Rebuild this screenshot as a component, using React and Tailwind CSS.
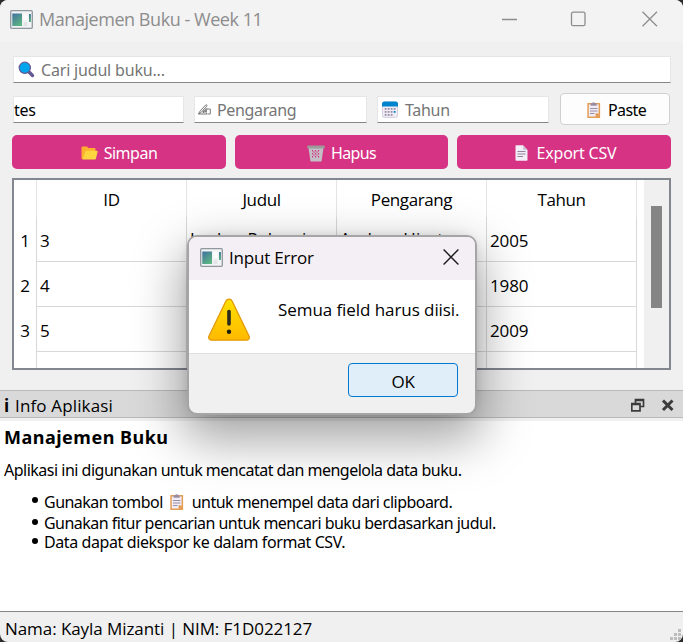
const SEGOE = "font-['Open_Sans','Noto_Sans',sans-serif]";
const TAHOMA = "font-['Noto_Sans','DejaVu_Sans',sans-serif]";

function AppIcon() {
  return (
    <svg width="23" height="19" viewBox="0 0 23 19" className="shrink-0">
      <defs>
        <linearGradient id="pane" x1="0" y1="0" x2="0.6" y2="1">
          <stop offset="0" stopColor="#3f6f9f" />
          <stop offset="1" stopColor="#5cb384" />
        </linearGradient>
      </defs>
      <rect x="0.7" y="0.7" width="21.6" height="17.6" rx="1" fill="#f1f3f5" stroke="#8f979f" strokeWidth="1.3" />
      <rect x="2.3" y="3.5" width="9.7" height="12.5" fill="url(#pane)" />
      <rect x="13.500" y="4" width="4" height="6" fill="#fbfcfc" />
      <rect x="13.500" y="12" width="4" height="4" fill="#e3e5e8" />
      <rect x="19" y="4" width="2" height="8" fill="url(#pane)" />
    </svg>
  );
}

function SearchIcon() {
  return (
    <svg width="17" height="17" viewBox="0 0 17 17" className="shrink-0">
      <path d="M10.5 10.5 14.500 14.500" stroke="#635994" strokeWidth="3.4" strokeLinecap="round" />
      <circle cx="6.8" cy="6.800" r="5.600" fill="#00a6ed" stroke="#635994" strokeWidth="1.2" />
    </svg>
  );
}

function WritingIcon() {
  return (
    <svg width="13" height="11" viewBox="0 0 13 11" className="shrink-0" fill="none" stroke="#6d6d6d" strokeWidth="0.9">
      <path d="M0.5 10 2 7.200 8 .600 9.200 1.600 3.400 8.200zM0.500 10h8.500M9 10 8 8.500 9.200 4.500 7 5.500 5 7.500M9.500 5h2.800v5H9.500M4.500 9l4-2M5 7.800 8 6" />
    </svg>
  );
}

function CalendarIcon() {
  return (
    <svg width="16" height="17" viewBox="0 0 16 17" className="shrink-0">
      <rect x="0.4" y="1" width="15.2" height="15.4" rx="2" fill="#f1edf7" stroke="#c9c3d3" strokeWidth="0.8" />
      <path d="M0 5.5V3a2.5 2.5 0 0 1 2.5-2.5h11A2.5 2.5 0 0 1 16 3v2.500z" fill="#0084ce" />
      {[3, 6, 9, 12].map((x) =>
        [7, 10, 13].map((y) =>
          x === 12 && y === 13 ? null : (
            <rect key={`${x}-${y}`} x={x - 0.3} y={y} width="1.8" height="1.8" fill={x === 12 && y === 10 ? "#0084ce" : "#998ea4"} />
          )
        )
      )}
    </svg>
  );
}

function ClipboardIcon() {
  return (
    <svg width="14" height="16" viewBox="0 0 14 16" className="shrink-0">
      <rect x="0.3" y="1" width="12.800" height="15" rx="0.6" fill="#e39d54" />
      <path d="M1.8 2.600h9.800v9.200l-2.900 2.800H1.800z" fill="#f1edf7" />
      <path d="M8.600 14.600v-3h3z" fill="#e0852f" />
      <path d="M3.500 1.200h1.600a1.600 1.600 0 0 1 3 0h1.600v2.600H3.500z" fill="#998ea4" />
      <path d="M3 6.500h7.500M3 9h7.500M3 11.500h4.500" stroke="#998ea4" strokeWidth="1.100" />
    </svg>
  );
}

function FolderIcon() {
  return (
    <svg width="17" height="14" viewBox="0 0 17 14" className="shrink-0">
      <path d="M0.500 1.500a1 1 0 0 1 1-1h4.500l1.500 1.500h6a1 1 0 0 1 1 1V13H1.500a1 1 0 0 1-1-1z" fill="#ffb02e" />
      <path d="M4.300 5.500a1 1 0 0 1 .9-.7h10.600a.8.8 0 0 1 .8 1l-1.700 6.900a1 1 0 0 1-1 .800H1.500z" fill="#fcd53f" />
    </svg>
  );
}

function TrashIcon() {
  return (
    <svg width="18" height="17" viewBox="0 0 18 17" className="shrink-0">
      <path d="M1.500 3h15l-2 13.500h-11z" fill="#c4bfc6" />
      {[5, 8, 11].map((y) =>
        [5, 8, 11].map((x) => (
          <g key={`${x}-${y}`} fill="#d63384">
            <rect x={x} y={y} width="1.100" height="1.500" />
            {x < 11 && y < 11 && <rect x={x + 1.500} y={y + 1.500} width="1.100" height="1.300" />}
          </g>
        ))
      )}
      <rect x="0.300" y="0.500" width="17.400" height="3" rx="1" fill="#9b9b9b" />
    </svg>
  );
}

function DocIcon() {
  return (
    <svg width="13" height="16" viewBox="0 0 13 16" className="shrink-0">
      <path d="M0.500 1a.8.8 0 0 1 .8-.8H8L12.500 5v10a.8.8 0 0 1-.8.800H1.300a.8.8 0 0 1-.8-.800z" fill="#f3eef8" />
      <path d="M8 .2 12.500 5H9a1 1 0 0 1-1-1z" fill="#cdc4d6" />
      <path d="M2.500 6.500h8M2.500 9h8M2.500 11.500h5.500" stroke="#8f849c" strokeWidth="1.200" />
    </svg>
  );
}

function WarningIcon() {
  return (
    <svg width="42" height="43" viewBox="0 0 42 43" className="shrink-0">
      <defs>
        <linearGradient id="warn" x1="0" y1="0" x2="0" y2="1">
          <stop offset="0" stopColor="#ffe000" />
          <stop offset="1" stopColor="#ffb900" />
        </linearGradient>
      </defs>
      <path d="M17.800 3.200a3.500 3.500 0 0 1 6.400 0L41 38a2.900 2.900 0 0 1-2.700 4.200H3.700A2.900 2.900 0 0 1 1 38z" fill="url(#warn)" stroke="#e39a08" strokeWidth="1.300" />
      <path d="M21 13.500v12.500" stroke="#2b2b1d" strokeWidth="3.600" strokeLinecap="round" />
      <circle cx="21" cy="33.800" r="2.200" fill="#1d1d12" />
    </svg>
  );
}

function Field({ children, className }) {
  return (
    <div className={`flex h-[27px] items-center border border-[#e6e6e6] border-b-[#868686] bg-white text-[16px] text-[#757575] ${className}`}>
      {children}
    </div>
  );
}

function PinkButton({ icon, label, width, track }) {
  return (
    <button className={`flex h-[34px] items-center justify-center rounded-[5px] bg-[#d63384] pt-[2px] text-[16px] text-white ${width}`}>
      {icon}
      <span className={track}>{label}</span>
    </button>
  );
}

const books = [
  ["1", "3", "Laskar Pelangi", "Andrea Hirata", "2005"],
  ["2", "4", "", "", "1980"],
  ["3", "5", "", "", "2009"],
];

function cellClass(i) {
  if (i === 0) return "h-[45px] border-r border-[#d8d8d8] text-center";
  if (i === 2 || i === 3) return "h-[45px] border-r border-b border-[#d8d8d8] pl-[3px] leading-[44px] tracking-[0.2px]";
  return "h-[45px] border-r border-b border-[#d8d8d8] pl-[3px]";
}

function BookTable() {
  return (
    <div className="mt-[9px] flex h-[192px] w-[659px] overflow-hidden border-2 border-[#828790] bg-white text-[17px] text-black">
      <div className={`w-[623px] ${SEGOE}`}>
        <div className="grid h-[37px] grid-cols-[23px_150px_150px_150px_150px] text-center leading-[39px] tracking-[-0.4px]">
          {["", "ID", "Judul", "Pengarang", "Tahun"].map((h) => (
            <div key={h} className="h-[37px] border-r border-[#e5e5e5]">{h}</div>
          ))}
        </div>
        {books.map((row) => (
          <div key={row[0]} className="grid h-[45px] grid-cols-[23px_150px_150px_150px_150px] leading-[47px] tracking-[-0.1px]">
            {row.map((cell, i) => (
              <div key={i} className={cellClass(i)}>{cell}</div>
            ))}
          </div>
        ))}
        <div className="grid h-[16px] grid-cols-[23px_150px_150px_150px_150px]">
          {[0, 1, 2, 3, 4].map((i) => (
            <div key={i} className="border-r border-[#d8d8d8]" />
          ))}
        </div>
      </div>
      <div className="ml-[7px] flex-1 bg-[#f0f0f0] pt-[26px] pl-[7px]">
        <div className="h-[102px] w-[11px] bg-[#858585]" />
      </div>
    </div>
  );
}

function Dialog() {
  return (
    <div className={`absolute top-[235px] left-[187px] h-[180px] w-[290px] overflow-hidden rounded-[10px] border-2 border-[#a5a5a5] bg-[#f0f0f0] text-black ${SEGOE}`}>
      <div className="flex h-[43px] items-center bg-[#f4eff4] pr-[16px] pb-[3px] pl-[11px]">
        <AppIcon />
        <span className="ml-[6px] flex-1 pt-[1px] text-[17px] tracking-[-0.2px]">Input Error</span>
        <svg width="16" height="16" viewBox="0 0 16 16">
          <path d="M.6.6l14.800 14.800M15.400.6.6 15.400" stroke="#1a1a1a" strokeWidth="1.400" />
        </svg>
      </div>
      <div className="flex h-[74px] border-b border-[#dfdfdf] bg-white pt-[18px] pl-[19px]">
        <WarningIcon />
        <span className="ml-[28px] text-[17px] leading-[23px] tracking-[-0.07px] whitespace-nowrap">Semua field harus diisi.</span>
      </div>
      <div className="flex justify-end pt-[9px] pr-[17px]">
        <button className="h-[34px] w-[110px] rounded-[4px] border border-[#0078d4] bg-[#e0eef9] pt-[3px] text-[17px] tracking-[-0.4px]">OK</button>
      </div>
    </div>
  );
}

export default function App() {
  return (
    <div className="h-[642px] w-[683px] overflow-hidden bg-[#2b2b2b]">
      <div className={`relative flex h-[642px] w-[683px] flex-col overflow-hidden rounded-[8px] bg-[#f0f0f0] ${TAHOMA}`}>
        <header className={`flex h-[42px] shrink-0 items-center bg-[#f3f3f3] pr-[25px] pb-[4px] pl-[10px] text-[#8d8d8d] ${SEGOE}`}>
          <AppIcon />
          <span className="ml-[6px] flex-1 pt-[1px] text-[18px] tracking-[-0.45px]">Manajemen Buku - Week 11</span>
          <svg width="156" height="16" viewBox="0 0 156 16" fill="none" stroke="#8d8d8d" strokeWidth="1.300">
            <path d="M0 8.500h15M140.500.8l14.500 14.500M155 .8l-14.500 14.500" />
            <rect x="69.500" y="1.200" width="13.500" height="13.500" rx="1.500" />
          </svg>
        </header>

        <main className="flex h-[348px] shrink-0 flex-col pt-[14px] pl-[12px]">
          <Field className="ml-[1px] w-[658px] pl-[4px]">
            <SearchIcon />
            <span className="ml-[6px] tracking-[-0.18px]">Cari judul buku...</span>
          </Field>
          <div className="mt-[10px] flex h-[32px] items-center">
            <Field className="ml-[1px] w-[171px] pt-[1px]"><span className="tracking-[-0.3px] text-black">tes</span></Field>
            <Field className="ml-[10px] w-[173px] pt-[1px] pl-[3px]">
              <WritingIcon />
              <span className="ml-[6px] tracking-[-0.35px]">Pengarang</span>
            </Field>
            <Field className="ml-[10px] w-[172px] pt-[1px] pl-[4px]">
              <CalendarIcon />
              <span className="ml-[7px] tracking-[-0.3px]">Tahun</span>
            </Field>
            <button className="ml-[11px] flex h-[32px] w-[110px] items-center justify-center gap-[7px] rounded-[4px] border border-[#d0d0d0] bg-[#fdfdfd] pt-[2px] pl-[3px] text-[16px] text-black">
              <ClipboardIcon />
              <span className="tracking-[-0.6px]">Paste</span>
            </button>
          </div>
          <div className="mt-[10px] flex gap-[9px]">
            <PinkButton icon={<FolderIcon />} label="Simpan" width="w-[214px]" track="ml-[6px] tracking-[-0.5px]" />
            <PinkButton icon={<TrashIcon />} label="Hapus" width="w-[213px]" track="ml-[6px] tracking-[-0.6px]" />
            <PinkButton icon={<DocIcon />} label="Export CSV" width="w-[214px] pl-[3px]" track="ml-[9px] tracking-[-0.2px]" />
          </div>
          <BookTable />
        </main>

        <section className="flex h-[222px] shrink-0 flex-col text-black">
          <div className={`flex h-[28px] items-center border-y border-[#b9b9b9] bg-[#d9d9d9] pt-[3px] pr-[9px] pl-[4px] ${SEGOE}`}>
            <b className="w-[6px] text-[17px]">i</b>
            <span className="ml-[5px] flex-1 text-[17px] tracking-[0.15px]">Info Aplikasi</span>
            <svg width="43" height="14" viewBox="0 0 43 14" fill="none" stroke="#3b3b3b" className="mb-[1px]">
              <path d="M4.500 5V1.500h8V8.500H9.500M4.500 2.300h8M.8 5.500h8.200v7.300H.8zM.8 6.300H9" strokeWidth="1.700" />
              <path d="M32 2.500l9.500 9.500M41.500 2.500 32 12" strokeWidth="3" />
            </svg>
          </div>
          <div className="mt-[3px] h-[191px] border-b border-[#868686] bg-white pt-[3px] pl-[4px] text-[16px]">
            <h1 className="text-[18px] leading-[26px] font-bold tracking-[0.5px]">Manajemen Buku</h1>
            <p className="mt-[8px] leading-[24px] tracking-[-0.5px]">Aplikasi ini digunakan untuk mencatat dan mengelola data buku.</p>
            <ul className="mt-[9px] ml-[28px] leading-[20px] tracking-[-0.52px]">
              <li className="flex h-[21px] items-center">
                <i className="mr-[6px] mb-[3px] size-[6px] rounded-full bg-black" />
                <span className="mr-[7px]">Gunakan tombol</span>
                <ClipboardIcon />
                <span className="ml-[8px] tracking-[-0.54px]">untuk menempel data dari clipboard.</span>
              </li>
              <li className="flex h-[20px] items-center">
                <i className="mr-[6px] mb-[1px] size-[6px] rounded-full bg-black" />
                <span className="pt-[1px] tracking-[-0.53px]">Gunakan fitur pencarian untuk mencari buku berdasarkan judul.</span>
              </li>
              <li className="flex h-[20px] items-center">
                <i className="mr-[6px] mb-[2px] size-[6px] rounded-full bg-black" />
                <span className="tracking-[-0.4px]">Data dapat diekspor ke dalam format CSV.</span>
              </li>
            </ul>
          </div>
        </section>

        <footer className={`flex flex-1 items-center justify-between pt-[4px] pl-[5px] text-[17px] text-black ${SEGOE}`}>
          <span className="tracking-[-0.07px]">Nama: Kayla Mizanti | NIM: F1D022127</span>
          <svg width="12" height="12" viewBox="0 0 12 12" fill="#bdbdbd" className="mt-[11px] mr-[1px]">
            <path d="M0 8h3v3H0zM4 8h3v3H4zM8 8h3v3H8zM4 4h3v3H4zM8 4h3v3H8zM8 0h3v3H8z" />
          </svg>
        </footer>

        <div className="absolute top-[240px] left-[192px] h-[170px] w-[280px] rounded-[10px] shadow-[0_20px_50px_10px_rgba(0,0,0,0.36),0_0_14px_rgba(0,0,0,0.22)]" />
        <Dialog />
      </div>
    </div>
  );
}
